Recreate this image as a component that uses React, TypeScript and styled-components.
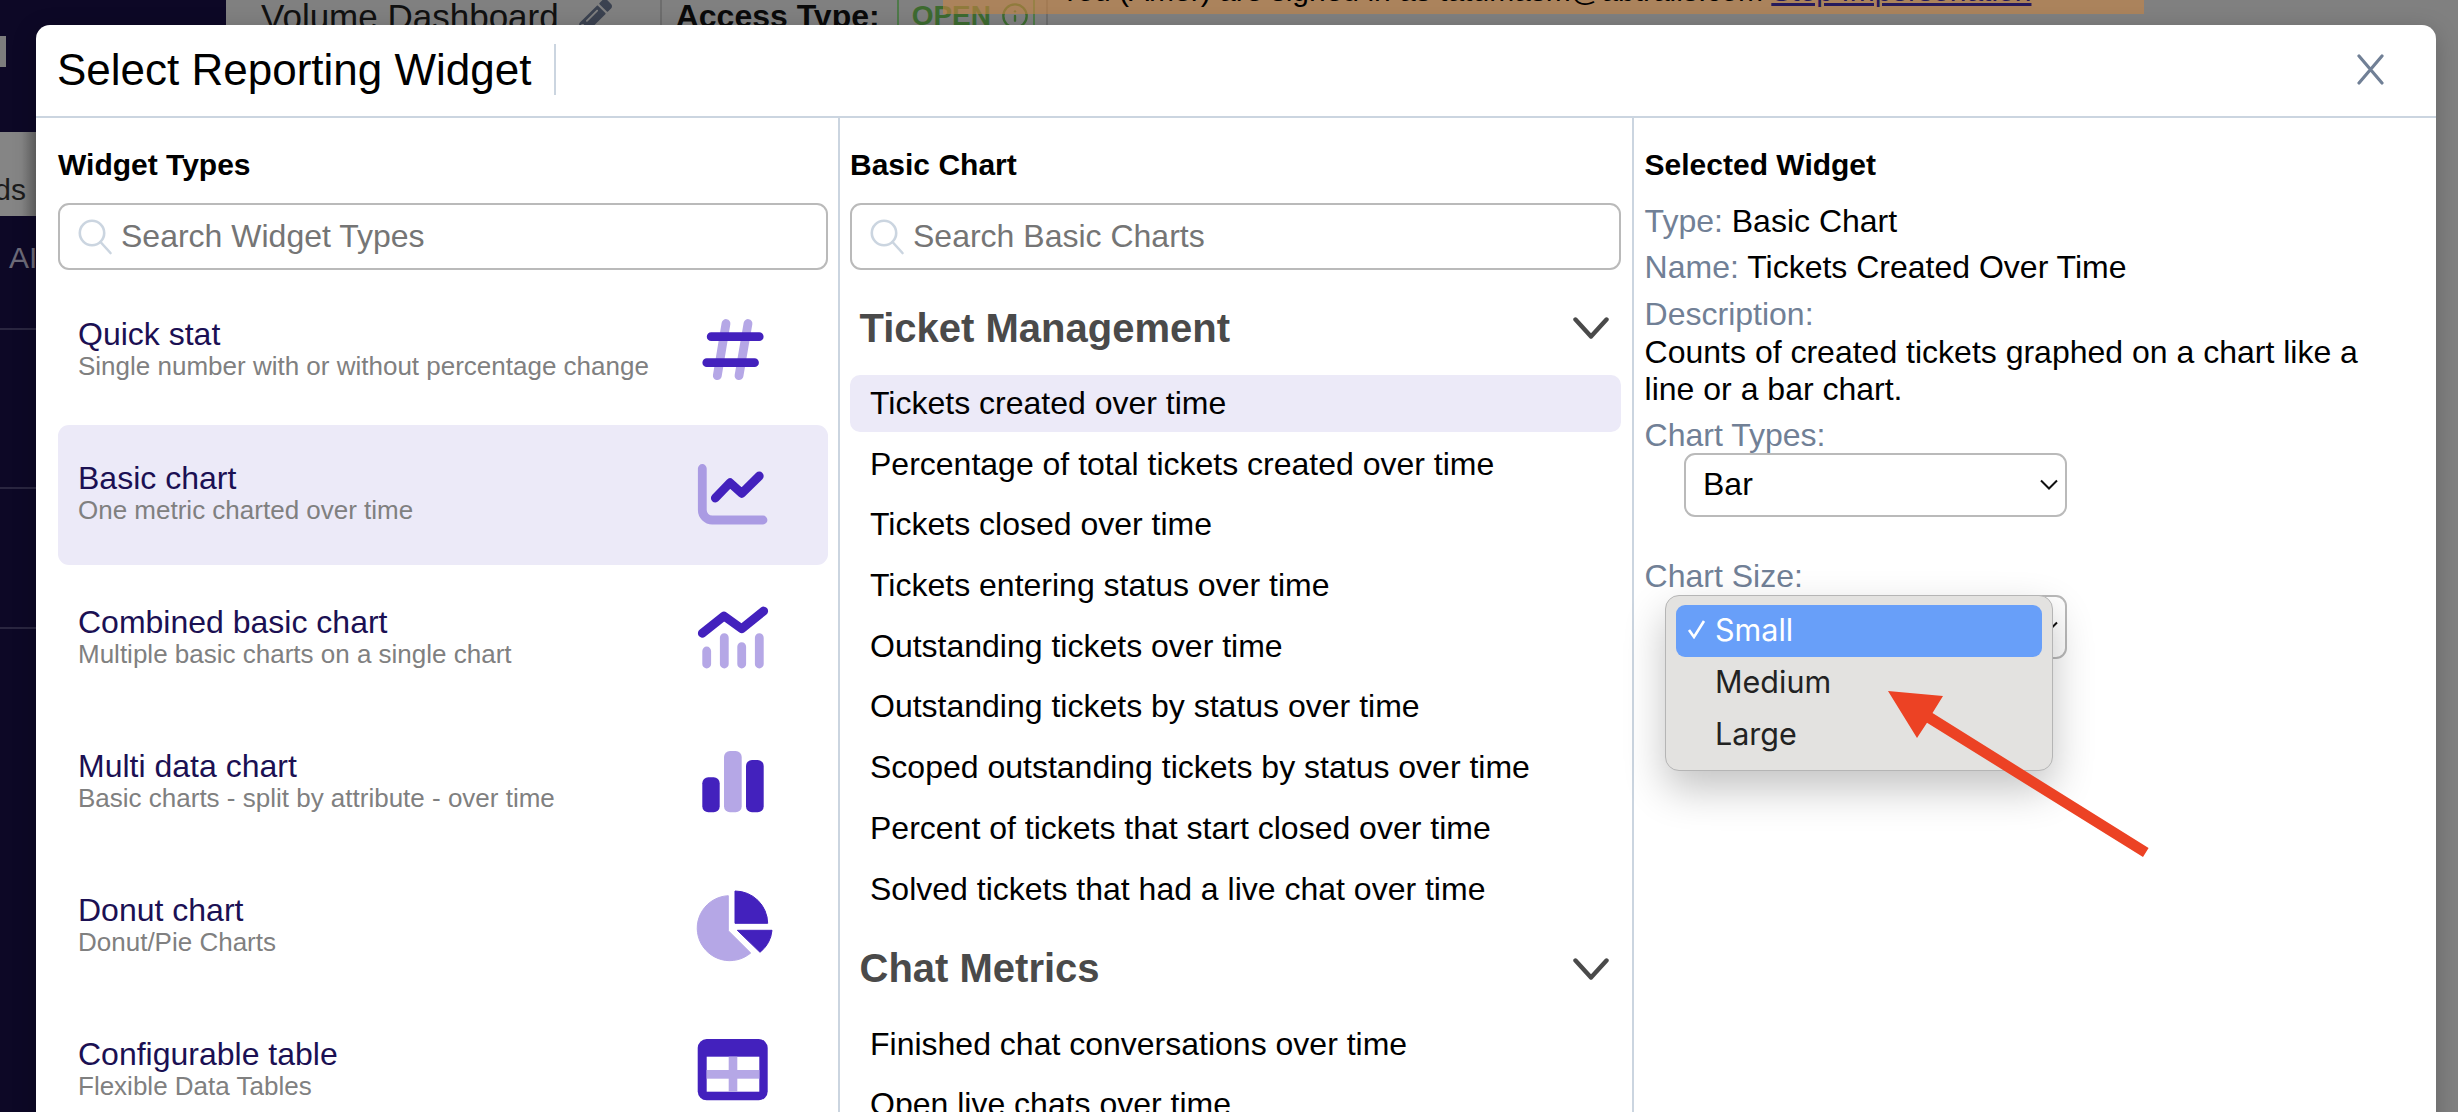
import React from "react";
import styled, { createGlobalStyle } from "styled-components";
import { FaPencilAlt } from "react-icons/fa";
import { Info } from "lucide-react";

const DARK = "#4321bd";
const LIGHT = "#b5a7e6";

const Global = createGlobalStyle`
  html, body { margin: 0; padding: 0; background: #808080; }
  * { box-sizing: border-box; }
  body { font-family: "Liberation Sans", Arial, sans-serif; }
`;

const Page = styled.div`
  position: relative;
  width: 2458px;
  height: 1112px;
  overflow: hidden;
  display: flex;
  background: #808080;
`;

/* ---- dimmed page behind the modal ---- */
const Sidebar = styled.aside`
  width: 226px;
  flex: none;
  background: #0d0826;
  display: flex;
  flex-direction: column;
  padding-top: 36px;
`;
const SideLogo = styled.div`
  width: 6px;
  height: 31px;
  background: #7d7d7d;
`;
const SideActive = styled.div`
  width: 36px;
  height: 84px;
  margin-top: 65px;
  background: linear-gradient(90deg, #858585 60%, #666 100%);
  display: flex;
  justify-content: flex-end;
  align-items: flex-end;
  padding: 0 10px 8px 0;
  overflow: hidden;
  font-size: 30px;
  line-height: 36px;
  color: #1c1c1c;
  white-space: nowrap;
`;
const SideLabel = styled.div`
  margin-top: 24px;
  padding-left: 9px;
  font-size: 30px;
  line-height: 36px;
  color: #6c6a78;
  white-space: nowrap;
`;
const SideRule = styled.div<{ $gap: number }>`
  height: 2px;
  margin-top: ${(p) => p.$gap}px;
  background: #2a2640;
`;
const Main = styled.main`
  flex: 1;
  min-width: 0;
`;
const TopBar = styled.div`
  height: 25px;
  display: flex;
  align-items: flex-start;
  padding-left: 35px;
`;
const PageTitle = styled.div`
  font-size: 35px;
  line-height: 40px;
  margin-top: -3px;
  color: #111;
  white-space: nowrap;
`;
const Pencil = styled(FaPencilAlt)`
  flex: none;
  width: 34px;
  height: 34px;
  margin: -1px 0 0 19px;
  color: #3b4250;
`;
const TopDivider = styled.div<{ $left: number }>`
  flex: none;
  width: 2px;
  height: 25px;
  margin-left: ${(p) => p.$left}px;
  background: #6d6d6d;
`;
const AccessLabel = styled.div`
  margin: -2px 0 0 14px;
  font-size: 32px;
  line-height: 36px;
  font-weight: 700;
  color: #0a0a0a;
  white-space: nowrap;
`;
const OpenBadge = styled.div`
  flex: none;
  width: 138px;
  height: 44px;
  margin: -6px 0 0 17px;
  border: 2px solid #4f7a4a;
  border-radius: 6px;
  display: flex;
  align-items: center;
  gap: 10px;
  padding-left: 13px;
  font-size: 28px;
  font-weight: 700;
  color: #3d6b30;
  svg {
    color: #3d6b30;
    flex: none;
  }
`;
const Banner = styled.div`
  position: absolute;
  left: 943px;
  top: 0;
  width: 1201px;
  height: 14px;
  overflow: hidden;
  padding-left: 117px;
  background: rgba(200, 133, 68, 0.6);
`;
const BannerText = styled.div`
  margin-top: -27px;
  font-size: 30px;
  line-height: 36px;
  color: #000;
  white-space: nowrap;
`;
const BannerLink = styled.span`
  color: #261a5c;
  text-decoration: underline;
  text-decoration-thickness: 3px;
  text-underline-offset: 2px;
`;

/* ---- modal ---- */
const Modal = styled.section`
  position: absolute;
  left: 36px;
  top: 25px;
  width: 2400px;
  height: 1110px;
  background: #fff;
  border-radius: 14px 14px 0 0;
  box-shadow: 0 6px 24px rgba(0, 0, 0, 0.22);
  overflow: hidden;
  display: flex;
  flex-direction: column;
`;
const ModalHeader = styled.header`
  height: 93px;
  flex: none;
  border-bottom: 2px solid #cbd5e0;
  display: flex;
  align-items: center;
  padding: 0 52px 2px 21px;
`;
const ModalTitle = styled.h1`
  margin: 0;
  font-size: 44px;
  line-height: 52px;
  font-weight: 400;
  color: #000;
  white-space: nowrap;
`;
const TitleDivider = styled.div`
  width: 2px;
  height: 51px;
  margin-left: 23px;
  background: #cbd5e0;
`;
const CloseIcon = styled.svg`
  margin-left: auto;
  width: 27px;
  height: 31px;
  fill: none;
  stroke: #718096;
  stroke-width: 3.2;
  stroke-linecap: round;
`;
const Columns = styled.div`
  flex: 1;
  display: flex;
  min-height: 0;
`;
const Column = styled.div<{ $w: number; $pl: number; $pr: number; $border?: boolean }>`
  width: ${(p) => p.$w}px;
  flex: none;
  padding: 29px ${(p) => p.$pr}px 0 ${(p) => p.$pl}px;
  border-right: ${(p) => (p.$border ? "2px solid #cbd5e0" : "none")};
`;
const ColHeading = styled.h2`
  margin: 0;
  font-size: 30px;
  line-height: 36px;
  font-weight: 700;
  color: #000;
`;
const SearchBox = styled.div`
  height: 67px;
  margin-top: 20px;
  border: 2px solid #bababa;
  border-radius: 11px;
  display: flex;
  align-items: center;
  padding: 0 0 0 17px;
  gap: 7px;
`;
const SearchIcon = styled.svg`
  width: 37px;
  height: 37px;
  flex: none;
  fill: none;
  stroke: #cbd5e0;
  stroke-width: 2.6;
  stroke-linecap: round;
`;
const Placeholder = styled.span`
  font-size: 32px;
  color: #757575;
  white-space: nowrap;
`;
const TypeList = styled.div`
  margin-top: 11px;
  display: flex;
  flex-direction: column;
  gap: 4px;
`;
const TypeItem = styled.div<{ $selected?: boolean }>`
  height: 140px;
  flex: none;
  border-radius: 11px;
  background: ${(p) => (p.$selected ? "#eceaf8" : "transparent")};
  display: flex;
  align-items: center;
  justify-content: space-between;
  padding: 0 56px 0 20px;
`;
const TypeText = styled.div`
  display: flex;
  flex-direction: column;
  margin-top: -4px;
`;
const TypeName = styled.div`
  font-size: 32px;
  line-height: 34px;
  color: #1b1053;
  white-space: nowrap;
`;
const TypeDesc = styled.div`
  font-size: 26px;
  line-height: 30px;
  color: #808080;
  white-space: nowrap;
`;
const WidgetIcon = styled.svg`
  width: 80px;
  height: 80px;
  flex: none;
  overflow: visible;
`;
const SectionHead = styled.div<{ $top: number }>`
  height: 44px;
  margin-top: ${(p) => p.$top}px;
  display: flex;
  align-items: center;
  justify-content: space-between;
  padding: 0 12px 0 9.5px;
`;
const SectionTitle = styled.h3`
  margin: 0;
  font-size: 40px;
  font-weight: 700;
  color: #4a4a4a;
`;
const Chevron = styled.svg`
  width: 36px;
  height: 22px;
  fill: none;
  stroke: #4a4a4a;
  stroke-width: 4.4;
  stroke-linecap: round;
  stroke-linejoin: round;
`;
const Rows = styled.div`
  margin-top: 25px;
  display: flex;
  flex-direction: column;
  gap: 3.7px;
`;
const ReportRow = styled.div<{ $selected?: boolean }>`
  height: 57px;
  flex: none;
  display: flex;
  align-items: center;
  padding-left: 20px;
  border-radius: 10px;
  font-size: 32px;
  color: #000;
  white-space: nowrap;
  background: ${(p) => (p.$selected ? "#eceaf8" : "transparent")};
`;
const InfoLine = styled.div<{ $top: number }>`
  margin-top: ${(p) => p.$top}px;
  font-size: 32px;
  line-height: 37px;
  color: #000;
`;
const Label = styled.span`
  color: #718096;
`;
const SelectWrap = styled.div<{ $top: number }>`
  position: relative;
  width: 383px;
  height: 64px;
  margin: ${(p) => p.$top}px 0 0 39.4px;
`;
const SelectBox = styled.div`
  height: 100%;
  border: 2px solid #bababa;
  border-radius: 11px;
  display: flex;
  align-items: center;
  justify-content: space-between;
  padding: 0 7px 0 17px;
  font-size: 32px;
  color: #000;
`;
const SelectChevron = styled.svg`
  width: 18px;
  height: 11px;
  fill: none;
  stroke: #111;
  stroke-width: 2;
`;
const Popup = styled.div`
  position: absolute;
  left: -19px;
  top: 0;
  width: 388px;
  height: 176px;
  background: #e3e2e0;
  border: 1px solid #b5b5b5;
  border-radius: 14px;
  box-shadow: 0 18px 42px rgba(0, 0, 0, 0.24);
  padding: 9px 10px;
  display: flex;
  flex-direction: column;
  font-family: Inter, "Liberation Sans", sans-serif;
  font-size: 30.5px;
`;
const PopupOption = styled.div<{ $active?: boolean }>`
  height: 52px;
  flex: none;
  display: flex;
  align-items: center;
  padding: 0 0 3px 11px;
  gap: 9px;
  border-radius: 9px;
  background: ${(p) => (p.$active ? "#689ff9" : "transparent")};
  color: ${(p) => (p.$active ? "#fff" : "#222")};
`;
const CheckSlot = styled.svg`
  width: 19px;
  height: 20px;
  flex: none;
  fill: none;
  stroke: #fff;
  stroke-width: 2.6;
`;
const Arrow = styled.svg`
  position: absolute;
  left: 1880px;
  top: 685px;
  width: 275px;
  height: 175px;
`;

const Hash = () => (
  <WidgetIcon viewBox="0 0 80 80" fill="none" strokeWidth={8.8} strokeLinecap="round">
    <path d="M34 12.5 25.3 64.7M56 12.5 47 64.7" stroke={LIGHT} />
    <path d="M19.2 25.7H67.2M14.8 51.7H62.5" stroke={DARK} />
  </WidgetIcon>
);
const LineChart = () => (
  <WidgetIcon viewBox="0 0 80 80" fill="none" strokeWidth={8.8} strokeLinecap="round" strokeLinejoin="round">
    <path d="M10.3 13.5V55a10 10 0 0 0 10 10H71" stroke="#aa9be3" />
    <path d="M23.3 43 38 27.7 49.7 38.3 67.3 21" stroke={DARK} />
  </WidgetIcon>
);
const Combined = () => (
  <WidgetIcon viewBox="0 0 80 80" fill="none" strokeWidth={8.8} strokeLinecap="round" strokeLinejoin="round">
    <path d="M14.7 52V65M32.3 38.7V65M49.7 47.7V65M67.3 38.7V65" stroke={LIGHT} />
    <path d="M10.3 34.3 32 17 49.7 29.7 71.7 12" stroke={DARK} />
  </WidgetIcon>
);
const Bars = () => (
  <WidgetIcon viewBox="0 0 80 80">
    <rect x="10.3" y="34.3" width="17.4" height="35" rx="6" fill={DARK} />
    <rect x="32" y="8" width="17.7" height="61.3" rx="6" fill={LIGHT} />
    <rect x="54" y="17" width="17.7" height="52.3" rx="6" fill={DARK} />
  </WidgetIcon>
);
const Pie = () => (
  <WidgetIcon viewBox="0 0 80 80">
    <path d="M36.3 8.7V43.7L58.7 66A32.5 32.5 0 1 1 36.3 8.7Z" fill={LIGHT} stroke={LIGHT} strokeWidth="1" strokeLinejoin="round" />
    <path d="M43 4V36.3H75.7A32.7 32.7 0 0 0 43 4Z" fill={DARK} stroke={DARK} strokeWidth="1" strokeLinejoin="round" />
    <path d="M45.3 43.3H80A32 32 0 0 1 68 65.3Z" fill={DARK} stroke={DARK} strokeWidth="1" strokeLinejoin="round" />
  </WidgetIcon>
);
const TableIcon = () => (
  <WidgetIcon viewBox="0 0 80 80">
    <rect x="5.7" y="8" width="70" height="61.3" rx="9" fill={DARK} />
    <rect x="14.7" y="25.7" width="52.6" height="35" fill="#fff" />
    <rect x="36.7" y="25.7" width="8.6" height="35" fill={LIGHT} />
    <rect x="14.7" y="39" width="52.6" height="8.7" fill={LIGHT} />
  </WidgetIcon>
);
const Search = () => (
  <SearchIcon viewBox="0 0 37 37">
    <circle cx="15" cy="15" r="12.2" />
    <path d="M23.5 24 33.5 35" />
  </SearchIcon>
);
const Down = () => (
  <Chevron viewBox="0 0 36 22">
    <path d="M2.5 2.5 18 19.5 33.5 2.5" />
  </Chevron>
);

const types = [
  { name: "Quick stat", desc: "Single number with or without percentage change", Icon: Hash },
  { name: "Basic chart", desc: "One metric charted over time", Icon: LineChart, selected: true },
  { name: "Combined basic chart", desc: "Multiple basic charts on a single chart", Icon: Combined },
  { name: "Multi data chart", desc: "Basic charts - split by attribute - over time", Icon: Bars },
  { name: "Donut chart", desc: "Donut/Pie Charts", Icon: Pie },
  { name: "Configurable table", desc: "Flexible Data Tables", Icon: TableIcon },
];

const ticketRows = [
  "Tickets created over time",
  "Percentage of total tickets created over time",
  "Tickets closed over time",
  "Tickets entering status over time",
  "Outstanding tickets over time",
  "Outstanding tickets by status over time",
  "Scoped outstanding tickets by status over time",
  "Percent of tickets that start closed over time",
  "Solved tickets that had a live chat over time",
];

export default function App() {
  return (
    <Page>
      <Global />
      <Sidebar>
        <SideLogo />
        <SideActive>Dashboards</SideActive>
        <SideLabel>AI Insights</SideLabel>
        <SideRule $gap={52} />
        <SideRule $gap={157} />
        <SideRule $gap={138} />
      </Sidebar>
      <Main>
        <TopBar>
          <PageTitle>Volume Dashboard</PageTitle>
          <Pencil />
          <TopDivider $left={48} />
          <AccessLabel>Access Type:</AccessLabel>
          <OpenBadge>
            OPEN
            <Info size={28} strokeWidth={2} />
          </OpenBadge>
          <TopDivider $left={11} />
        </TopBar>
      </Main>
      <Banner>
        <BannerText>
          You (Amer) are signed in as tatumasm@abtrails.com <BannerLink>Stop Impersonation</BannerLink>
        </BannerText>
      </Banner>

      <Modal>
        <ModalHeader>
          <ModalTitle>Select Reporting Widget</ModalTitle>
          <TitleDivider />
          <CloseIcon viewBox="0 0 27 31">
            <path d="M2 2 25 29M25 2 2 29" />
          </CloseIcon>
        </ModalHeader>
        <Columns>
          <Column $w={804} $pl={22} $pr={10} $border>
            <ColHeading>Widget Types</ColHeading>
            <SearchBox>
              <Search />
              <Placeholder>Search Widget Types</Placeholder>
            </SearchBox>
            <TypeList>
              {types.map(({ name, desc, Icon, selected }) => (
                <TypeItem key={name} $selected={selected}>
                  <TypeText>
                    <TypeName>{name}</TypeName>
                    <TypeDesc>{desc}</TypeDesc>
                  </TypeText>
                  <Icon />
                </TypeItem>
              ))}
            </TypeList>
          </Column>
          <Column $w={794} $pl={10} $pr={11} $border>
            <ColHeading>Basic Chart</ColHeading>
            <SearchBox>
              <Search />
              <Placeholder>Search Basic Charts</Placeholder>
            </SearchBox>
            <SectionHead $top={36}>
              <SectionTitle>Ticket Management</SectionTitle>
              <Down />
            </SectionHead>
            <Rows>
              {ticketRows.map((r, i) => (
                <ReportRow key={r} $selected={i === 0}>
                  {r}
                </ReportRow>
              ))}
            </Rows>
            <SectionHead $top={29}>
              <SectionTitle>Chat Metrics</SectionTitle>
              <Down />
            </SectionHead>
            <Rows>
              <ReportRow>Finished chat conversations over time</ReportRow>
              <ReportRow>Open live chats over time</ReportRow>
            </Rows>
          </Column>
          <Column $w={802} $pl={10.6} $pr={40}>
            <ColHeading>Selected Widget</ColHeading>
            <InfoLine $top={19.5}>
              <Label>Type:</Label> Basic Chart
            </InfoLine>
            <InfoLine $top={9}>
              <Label>Name:</Label> Tickets Created Over Time
            </InfoLine>
            <InfoLine $top={10}>
              <Label>Description:</Label>
            </InfoLine>
            <InfoLine $top={1}>Counts of created tickets graphed on a chart like a line or a bar chart.</InfoLine>
            <InfoLine $top={9}>
              <Label>Chart Types:</Label>
            </InfoLine>
            <SelectWrap $top={-1}>
              <SelectBox>
                Bar
                <SelectChevron viewBox="0 0 18 11">
                  <path d="M1 1.5 9 9.5 17 1.5" />
                </SelectChevron>
              </SelectBox>
            </SelectWrap>
            <InfoLine $top={41}>
              <Label>Chart Size:</Label>
            </InfoLine>
            <SelectWrap $top={0}>
              <SelectBox>
                <span />
                <SelectChevron viewBox="0 0 18 11">
                  <path d="M1 1.5 9 9.5 17 1.5" />
                </SelectChevron>
              </SelectBox>
              <Popup>
                <PopupOption $active>
                  <CheckSlot viewBox="0 0 19 20">
                    <path d="M2 11 7 18 17 2" />
                  </CheckSlot>
                  Small
                </PopupOption>
                <PopupOption>
                  <CheckSlot as="span" />
                  Medium
                </PopupOption>
                <PopupOption>
                  <CheckSlot as="span" />
                  Large
                </PopupOption>
              </Popup>
            </SelectWrap>
          </Column>
        </Columns>
      </Modal>

      <Arrow viewBox="0 0 275 175">
        <path d="M8 6 63 11 52.5 28 268.6 163 263 172 47 37.7 37 53Z" fill="#ec4224" />
      </Arrow>
    </Page>
  );
}
